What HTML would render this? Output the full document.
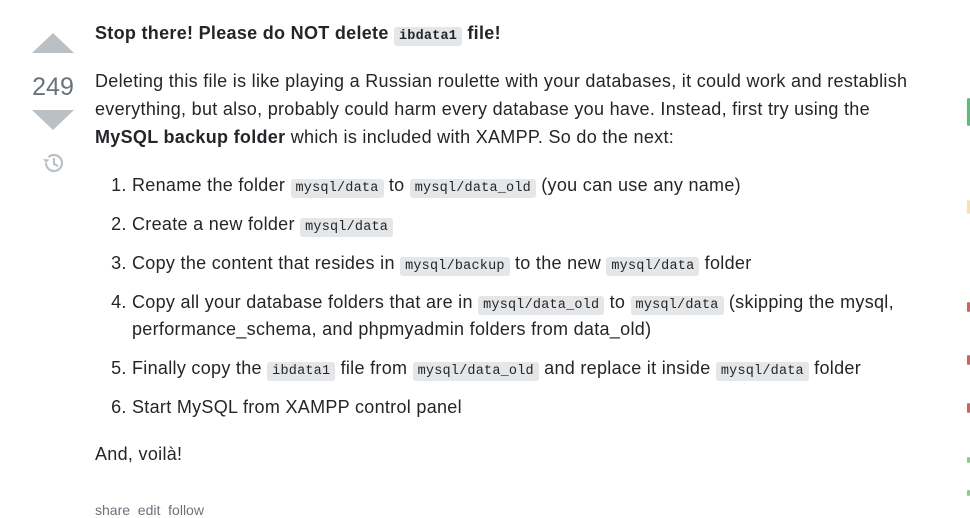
<!DOCTYPE html>
<html><head><meta charset="utf-8"><style>
body{margin:0;width:970px;height:512px;overflow:hidden;background:#fff;font-family:"Liberation Sans",Arial,sans-serif;color:#232629;position:relative}
.vote{position:absolute;left:30px;top:33px;width:46px;text-align:center}
.up{width:0;height:0;border-left:21px solid transparent;border-right:21px solid transparent;border-bottom:20px solid #bbc0c4;margin:0 auto}
.dn{width:0;height:0;border-left:21px solid transparent;border-right:21px solid transparent;border-top:20px solid #bbc0c4;margin:0 auto}
.cnt{font-size:25px;color:#6a737c;margin:20px 0 9px;line-height:28px}
.post{position:absolute;left:95px;top:19px;width:870px;font-size:18px;letter-spacing:0.3px;line-height:28px}
code{font-family:"Liberation Mono",monospace;font-size:13.5px;letter-spacing:0.2px;background:#e4e6e8;padding:2px 5px;border-radius:3px;line-height:1}
h{display:block;font-weight:bold;margin:0 0 20px}
p{margin:0 0 21px}
ol{margin:0 0 19px;padding-left:37px}
li{margin-bottom:12px;line-height:27px}
.foot{position:absolute;top:502px;font-size:14px;color:#6a737c}
.sl{position:absolute;left:967px;width:3px;border-radius:2px}
</style></head><body>
<div class="vote"><div class="up"></div><div class="cnt">249</div><div class="dn"></div>
<svg width="26" height="26" viewBox="0 0 26 26" style="margin-top:20px"><path d="M6 13a8 8 0 1 0 2.5-5.8" fill="none" stroke="#bbc0c4" stroke-width="2.2"/><path d="M3 9l3 4 3.5-3.5z" fill="#bbc0c4"/><path d="M14 8v6l4 2" fill="none" stroke="#bbc0c4" stroke-width="2.2"/></svg></div>
<div class="post">
<h>Stop there! Please do NOT delete <code>ibdata1</code> file!</h>
<p>Deleting this file is like playing a Russian roulette with your databases, it could work and restablish<br>everything, but also, probably could harm every database you have. Instead, first try using the<br><b>MySQL backup folder</b> which is included with XAMPP. So do the next:</p>
<ol>
<li>Rename the folder <code>mysql/data</code> to <code>mysql/data_old</code> (you can use any name)</li>
<li>Create a new folder <code>mysql/data</code></li>
<li>Copy the content that resides in <code>mysql/backup</code> to the new <code>mysql/data</code> folder</li>
<li>Copy all your database folders that are in <code>mysql/data_old</code> to <code>mysql/data</code> (skipping the mysql,<br>performance_schema, and phpmyadmin folders from data_old)</li>
<li>Finally copy the <code>ibdata1</code> file from <code>mysql/data_old</code> and replace it inside <code>mysql/data</code> folder</li>
<li>Start MySQL from XAMPP control panel</li>
</ol>
<p>And, voilà!</p>
</div>
<div class="foot" style="left:95px">share &nbsp;edit &nbsp;follow</div>
<div class="sl" style="top:98px;height:28px;background:#5eba7d"></div>
<div class="sl" style="top:200px;height:14px;background:#f8e0b0"></div>
<div class="sl" style="top:302px;height:10px;background:#c66"></div>
<div class="sl" style="top:355px;height:10px;background:#c66"></div>
<div class="sl" style="top:403px;height:10px;background:#c66"></div>
<div class="sl" style="top:457px;height:6px;background:#8c8"></div>
<div class="sl" style="top:490px;height:6px;background:#8c8"></div>
</body></html>
